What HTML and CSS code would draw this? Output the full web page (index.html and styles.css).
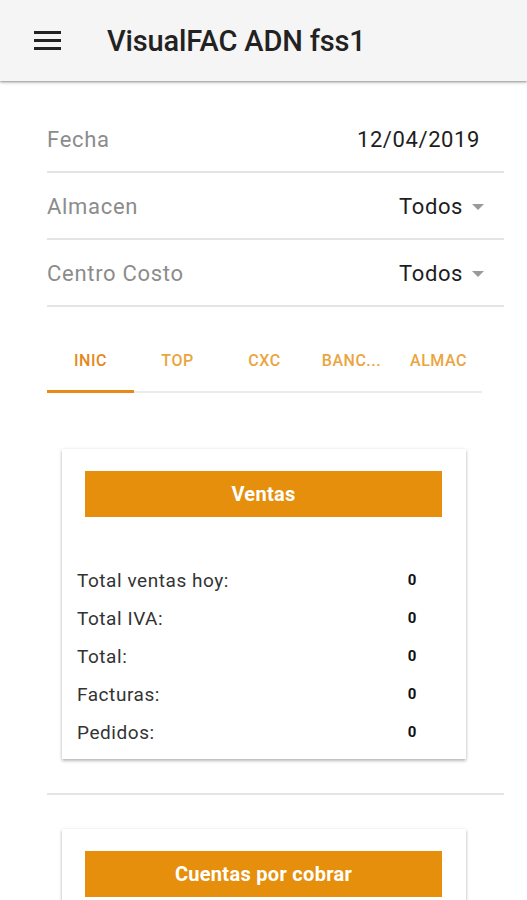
FILE: index.html
```html
<!DOCTYPE html>
<html lang="es">
<head>
<meta charset="utf-8">
<title>VisualFAC ADN fss1</title>
<link rel="stylesheet" href="styles.css">
</head>
<body>
<header class="appbar">
  <svg class="menu" width="28" height="20" viewBox="0 0 28 20"><rect x="0" y="1" width="27" height="3" fill="#222"/><rect x="0" y="9" width="27" height="3" fill="#222"/><rect x="0" y="17" width="27" height="3" fill="#222"/></svg>
  <h1 class="title">VisualFAC ADN fss1</h1>
</header>
<main class="content">
  <div class="field">
    <span class="label">Fecha</span>
    <span class="value date">12/04/2019</span>
  </div>
  <div class="field">
    <span class="label">Almacen</span>
    <span class="value select">Todos<svg class="caret" width="12" height="6" viewBox="0 0 12 6"><path d="M0 0h12L6 6z" fill="#9a9a9a"/></svg></span>
  </div>
  <div class="field">
    <span class="label">Centro Costo</span>
    <span class="value select">Todos<svg class="caret" width="12" height="6" viewBox="0 0 12 6"><path d="M0 0h12L6 6z" fill="#9a9a9a"/></svg></span>
  </div>
  <nav class="tabs">
    <div class="tab active">INIC</div>
    <div class="tab">TOP</div>
    <div class="tab">CXC</div>
    <div class="tab">BANC...</div>
    <div class="tab">ALMAC</div>
  </nav>
  <section class="card">
    <div class="card-btn">Ventas</div>
    <div class="rows">
      <div class="row"><span class="rl">Total ventas hoy:</span><span class="rv">0</span></div>
      <div class="row"><span class="rl">Total IVA:</span><span class="rv">0</span></div>
      <div class="row"><span class="rl">Total:</span><span class="rv">0</span></div>
      <div class="row"><span class="rl">Facturas:</span><span class="rv">0</span></div>
      <div class="row"><span class="rl">Pedidos:</span><span class="rv">0</span></div>
    </div>
  </section>
  <hr class="divider">
  <section class="card second">
    <div class="card-btn">Cuentas por cobrar</div>
  </section>
</main>
</body>
</html>
```
FILE: styles.css
```css
* { box-sizing: border-box; }
html, body { margin: 0; padding: 0; background: #fff; }
body {
  font-family: Roboto, "Liberation Sans", sans-serif;
  height: 900px;
  overflow: hidden;
}
.appbar {
  height: 81px;
  background: #f5f5f5;
  display: flex;
  align-items: center;
  padding-left: 34px;
  box-shadow: 0 1px 2px rgba(0,0,0,0.35), 0 2px 4px rgba(0,0,0,0.12);
  position: relative;
  z-index: 1;
}
.menu { display: block; margin-top: -2px; }
.title {
  margin: 0 0 0 45px;
  font-size: 29px;
  font-weight: 500;
  color: #222;
  letter-spacing: -0.15px;
}
.content {
  padding: 25px 23px 0 47px;
}
.field {
  height: 67px;
  display: flex;
  align-items: center;
  justify-content: space-between;
  border-bottom: 2px solid #e4e4e4;
  padding-top: 1px;
}
.label {
  font-size: 22px;
  color: #8c8c8c;
  letter-spacing: 0.7px;
}
.value {
  font-size: 22px;
  color: #1e1e1e;
  letter-spacing: 0.6px;
}
.date { margin-right: 24px; }
.select {
  display: flex;
  align-items: center;
  margin-right: 20px;
}
.caret { margin-left: 9px; margin-top: 1px; }
.tabs {
  width: 435px;
  display: flex;
  margin-top: 20px;
  border-bottom: 2px solid #ececec;
}
.tab {
  flex: 1;
  height: 66px;
  display: flex;
  align-items: center;
  justify-content: center;
  font-size: 16px;
  font-weight: 500;
  letter-spacing: 0.5px;
  color: #eaa540;
  padding-top: 4px;
  border-bottom: 3px solid transparent;
  margin-bottom: -2px;
}
.tab.active {
  color: #e3891c;
  border-bottom-color: #e8891a;
}
.card {
  margin: 56px 38px 0 15px;
  background: #fff;
  box-shadow: 0 2px 3px rgba(0,0,0,0.25), 0 0 4px rgba(0,0,0,0.08);
  padding: 22px 24px 8px 23px;
}
.card-btn {
  height: 46px;
  background: #e68f0c;
  color: #fff;
  font-size: 20px;
  font-weight: 700;
  letter-spacing: 0.3px;
  display: flex;
  align-items: center;
  justify-content: center;
}
.rows {
  margin: 44px 24px 0 -8px;
}
.row {
  height: 38px;
  display: flex;
  align-items: center;
  justify-content: space-between;
}
.rl {
  font-size: 19px;
  color: #333;
  letter-spacing: 0.55px;
}
.rv {
  font-size: 15px;
  font-weight: 700;
  color: #111;
  width: 12px;
  text-align: center;
}
.divider {
  margin: 34px 0 0 0;
  border: 0;
  border-top: 2px solid #e4e4e4;
}
.card.second {
  margin-top: 34px;
  padding-bottom: 20px;
}
```
